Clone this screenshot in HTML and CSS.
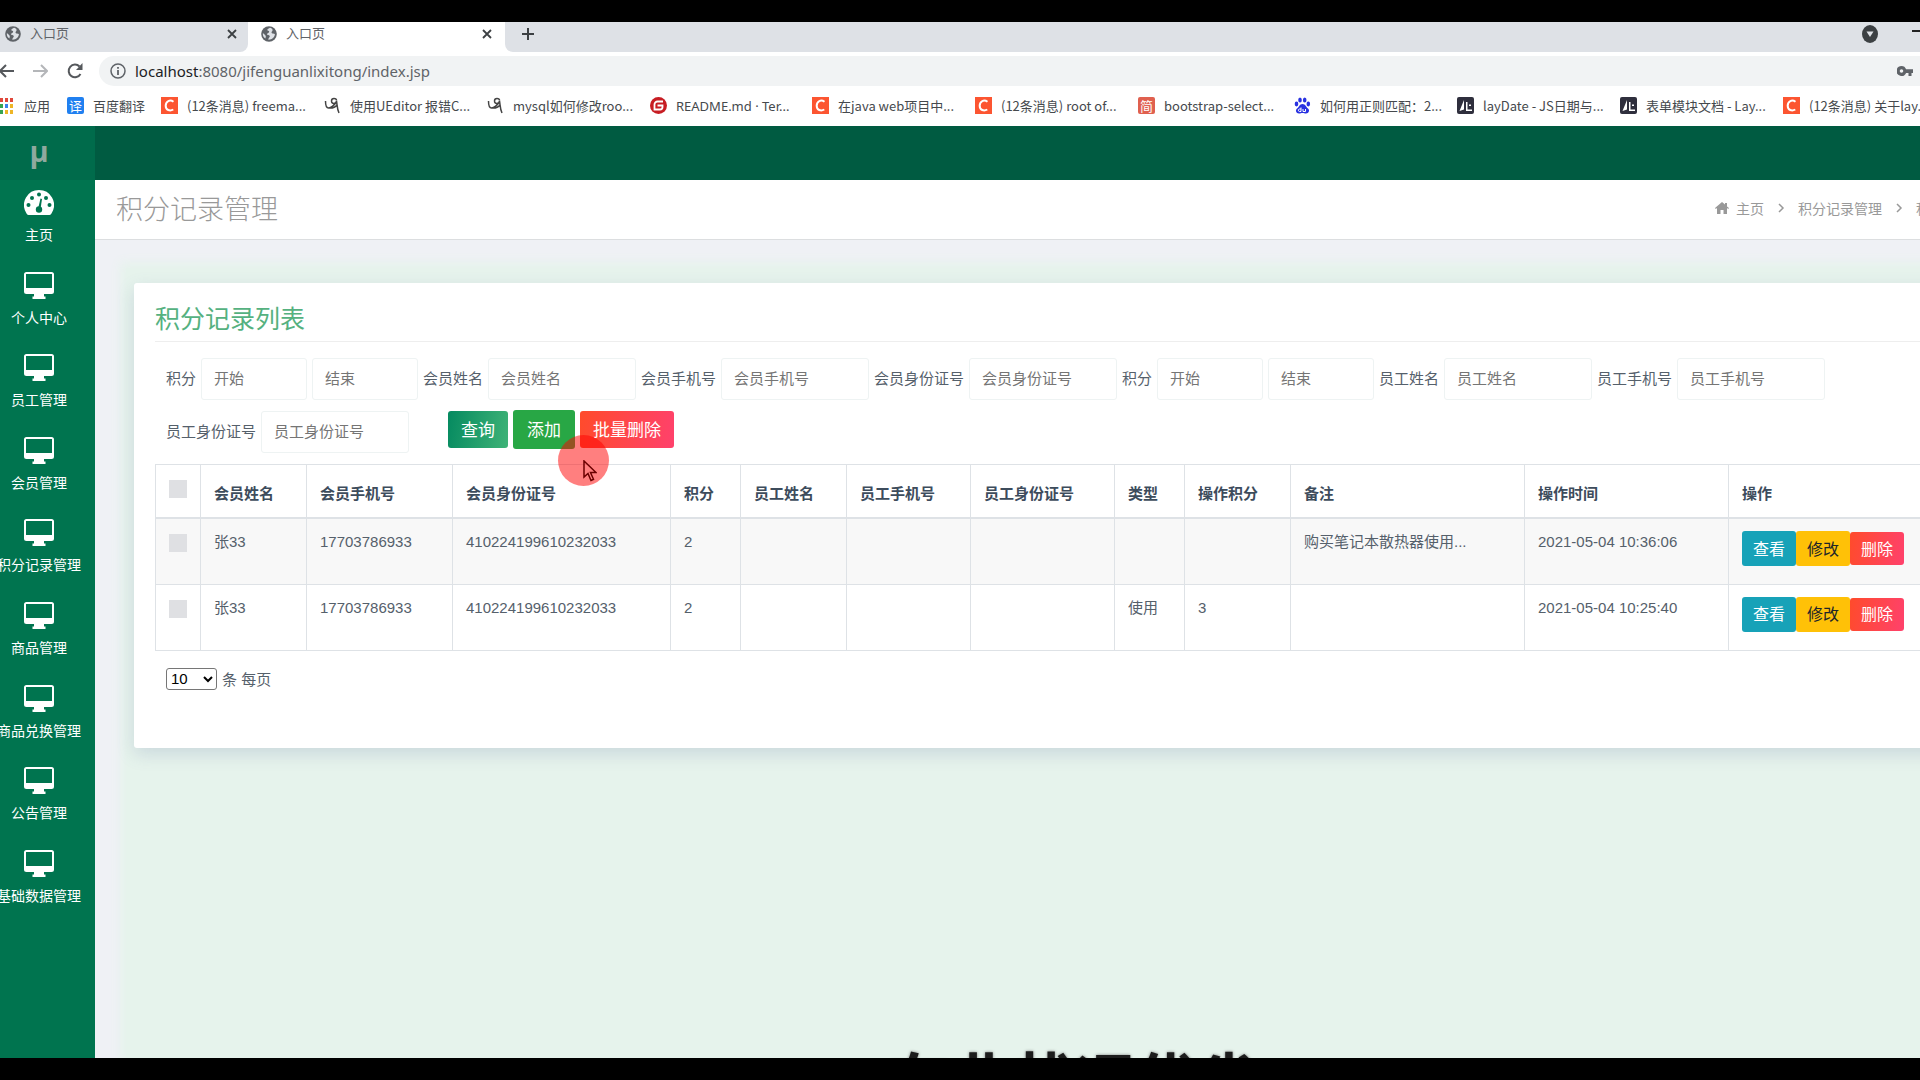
FILE: index.html
```html
<!DOCTYPE html>
<html lang="zh-CN">
<head>
  <meta charset="utf-8">
  <title>入口页</title>
  <link rel="stylesheet" href="styles.css">
</head>
<body>
  <!-- shared icons -->
  <svg class="sprite">
    <symbol id="i-globe" viewBox="0 0 16 16">
      <circle cx="8" cy="8" r="7.8" fill="#5f6368"/>
      <path d="M9 1.8c-1 1-2.700 1-2.700 2.300 0 1 1.900.5 1.900 1.700S6 7 6 8.200c0 1 2.800.6 2.800 2 0 1.200-1.500 1.400-1.500 3.600 3.500.2 6.500-2.400 6.600-5.700-1.300-1-2.500-.2-3.200-1.200-.7-1.200.9-1.600.9-3C11.500 2.800 10 1.900 9 1.800zM1.900 7c.9 1.400 2.600 1.400 2.900 3.200.1.900-.4 1.600-.3 2.400C2.400 11.300 1.500 9.200 1.900 7z" fill="#dee1e6"/>
    </symbol>
    <symbol id="i-close" viewBox="0 0 12 12">
      <path d="M2 2l8 8M10 2l-8 8" stroke="#3c4043" stroke-width="1.800" fill="none"/>
    </symbol>
    <symbol id="i-desktop" viewBox="0 0 30 28">
      <path d="M2.500 0h25A2.500 2.500 0 0 1 30 2.500v17a2.500 2.500 0 0 1-2.500 2.500H20v2.500h1.500V27h-13v-2.500H10V22H2.500A2.500 2.500 0 0 1 0 19.500v-17A2.500 2.500 0 0 1 2.500 0zM2 2v14h26V2z" fill="#fff" fill-rule="evenodd"/>
    </symbol>
    <symbol id="i-csdn" viewBox="0 0 17 17">
      <path d="M0 0h17v17H0z" fill="#fc5531"/>
      <path d="M12.500 4.700C9 2.300 4.700 4 4.700 8.700c0 4.500 4.300 5.700 7.600 3.800" stroke="#fff" stroke-width="2" fill="none"/>
    </symbol>
    <symbol id="i-ue" viewBox="0 0 17 17">
      <path d="M1.500 4c0 5 .5 7 3 7s5-2 8-6M12.500 3.500c0-2.500-5-3-5 .5s4.500 3 5 0c.8 4 .5 8 2.500 12M4.500 11c4 .5 7-1 8.500-3" stroke="#444" stroke-width="1.500" fill="none"/>
    </symbol>
    <symbol id="i-lay" viewBox="0 0 17 17">
      <rect width="17" height="17" rx="2" fill="#2f2f3d"/>
      <path d="M2.500 14L7 3v9.500zM9 5v9h6v-1.500h-4.500V5zM12 7.500h2v1.500h-2z" fill="#fff"/>
    </symbol>
    <symbol id="i-chevron" viewBox="0 0 8 12">
      <path d="M2 2l4 4-4 4" stroke="#999" stroke-width="1.500" fill="none"/>
    </symbol>
  </svg>

  <div class="screen">
    <div class="tabs">
      <div class="tab">
        <svg class="tab-icon"><use href="#i-globe"/></svg>
        <span class="tab-title">入口页</span>
        <button class="icon-btn" aria-label="关闭"><svg class="close"><use href="#i-close"/></svg></button>
      </div>
      <div class="tab active">
        <svg class="tab-icon"><use href="#i-globe"/></svg>
        <span class="tab-title">入口页</span>
        <button class="icon-btn" aria-label="关闭"><svg class="close"><use href="#i-close"/></svg></button>
      </div>
      <div class="tab-rest">
        <button class="icon-btn" aria-label="新标签页">
          <svg width="14" height="14" viewBox="0 0 14 14"><path d="M7 1v12M1 7h12" stroke="#3c4043" stroke-width="2"/></svg>
        </button>
        <div class="window-actions">
          <svg width="16" height="18" viewBox="0 0 16 18"><ellipse cx="8" cy="9" rx="8" ry="9" fill="#3c4043"/><path d="M4.500 6.500h7L8 12z" fill="#dee1e6"/></svg>
          <svg width="8" height="18" viewBox="0 0 8 18"><path d="M0 6h8" stroke="#222" stroke-width="2"/></svg>
        </div>
      </div>
    </div>

    <div class="toolbar">
      <button class="icon-btn" aria-label="后退"><svg width="14" height="16" viewBox="0 0 14 16"><path d="M14 8H0M6 2L0 8l6 6" stroke="#55585c" stroke-width="2" fill="none"/></svg></button>
      <button class="icon-btn" aria-label="前进"><svg width="15" height="16" viewBox="0 0 15 16"><path d="M0 8h14M8 2l6 6-6 6" stroke="#b4b6b9" stroke-width="2" fill="none"/></svg></button>
      <button class="icon-btn" aria-label="刷新"><svg width="16" height="16" viewBox="0 0 16 16"><path d="M13.500 11A6.300 6.300 0 1 1 12.500 3.500" stroke="#55585c" stroke-width="2" fill="none"/><path d="M15.500 0v7H9z" fill="#55585c"/></svg></button>
      <div class="address">
        <svg width="16" height="16" viewBox="0 0 16 16"><circle cx="8" cy="8" r="7" fill="none" stroke="#5f6368" stroke-width="1.500"/><path d="M8 7v5M8 4v1.700" stroke="#5f6368" stroke-width="1.800"/></svg>
        <span class="url"><b>localhost</b>:8080/jifenguanlixitong/index.jsp</span>
        <svg width="16" height="12" viewBox="0 0 16 12"><path d="M4.500 1a5 5 0 0 1 4.600 3.300H16V8h-1.500v3h-3V8H9.100A5 5 0 1 1 4.500 1zm0 3.200a1.800 1.800 0 1 0 0 3.600 1.800 1.800 0 0 0 0-3.600z" fill="#5f6368" fill-rule="evenodd"/></svg>
      </div>
    </div>

    <div class="bookmarks">
      <a class="bookmark apps" href="#">
        <svg width="13" height="17" viewBox="0 0 13 17"><path d="M0 1h3v4H0zM5 1h3v4H5zM10 1h3v4h-3z" fill="#e0483c"/><path d="M0 7h3v4H0z" fill="#36a351"/><path d="M5 7h3v4H5z" fill="#3b82ec"/><path d="M10 7h3v4h-3zM10 13h3v4h-3zM5 13h3v4H5z" fill="#eeb526"/><path d="M0 13h3v4H0z" fill="#36a351"/></svg>
        应用
      </a>
      <a class="bookmark trans" href="#"><span class="badge blue">译</span>百度翻译</a>
      <a class="bookmark" href="#"><svg><use href="#i-csdn"/></svg>(12条消息) freema...</a>
      <a class="bookmark" href="#"><svg><use href="#i-ue"/></svg>使用UEditor 报错C...</a>
      <a class="bookmark" href="#"><svg><use href="#i-ue"/></svg>mysql如何修改roo...</a>
      <a class="bookmark latin" href="#"><svg viewBox="0 0 17 17"><circle cx="8.500" cy="8.500" r="8.500" fill="#c71d23"/><path d="M13 4.500H7.500a3 3 0 0 0-3 3v5H10a2.500 2.500 0 0 0 2.500-2.500V8.500H7.500" stroke="#fff" stroke-width="1.800" fill="none"/></svg>README.md · Ter...</a>
      <a class="bookmark" href="#"><svg><use href="#i-csdn"/></svg>在java web项目中...</a>
      <a class="bookmark" href="#"><svg><use href="#i-csdn"/></svg>(12条消息) root of...</a>
      <a class="bookmark short" href="#"><span class="badge red">简</span>bootstrap-select...</a>
      <a class="bookmark" href="#"><svg viewBox="0 0 17 17"><g fill="#2932e1"><ellipse cx="2.500" cy="7" rx="1.800" ry="2.400"/><ellipse cx="6" cy="3" rx="1.800" ry="2.500"/><ellipse cx="10.700" cy="3" rx="1.800" ry="2.500"/><ellipse cx="14.300" cy="7" rx="1.800" ry="2.400"/><path d="M8.500 7c3 0 3.500 3 5.500 4.500s1 5-2 5c-1.500 0-2-.5-3.500-.5s-2 .5-3.500.5c-3 0-4-3.500-2-5S5.500 7 8.500 7z"/></g><path d="M7 10.500v4H5.500c-1.500 0-1.500-2.500 0-2.500H7M9 12v2.500h2.500V12" stroke="#fff" fill="none"/></svg>如何用正则匹配：2...</a>
      <a class="bookmark" href="#"><svg><use href="#i-lay"/></svg>layDate - JS日期与...</a>
      <a class="bookmark" href="#"><svg><use href="#i-lay"/></svg>表单模块文档 - Lay...</a>
      <a class="bookmark" href="#"><svg><use href="#i-csdn"/></svg>(12条消息) 关于lay...</a>
    </div>

    <div class="app">
      <aside class="sidebar">
        <div class="logo">μ</div>
        <nav class="menu">
          <a href="#">
            <svg viewBox="0 0 30 28"><path d="M15 1a15 15 0 0 1 13 22.500c-.8 1.500-1.200 2.500-2.500 2.500h-21C3.200 26 2.800 25 2 23.500A15 15 0 0 1 15 1z" fill="#fff"/><g fill="#00744f"><circle cx="4.500" cy="16" r="2"/><circle cx="8" cy="9" r="2"/><circle cx="15" cy="5.500" r="2"/><circle cx="22" cy="9" r="2"/><circle cx="25.500" cy="16" r="2"/><circle cx="15" cy="20.500" r="3.200"/><path d="M14 20l2.500-10.500 1.500.4L16.500 20z"/></g></svg>
            主页
          </a>
          <a href="#"><svg><use href="#i-desktop"/></svg>个人中心</a>
          <a href="#"><svg><use href="#i-desktop"/></svg>员工管理</a>
          <a href="#"><svg><use href="#i-desktop"/></svg>会员管理</a>
          <a href="#"><svg><use href="#i-desktop"/></svg>积分记录管理</a>
          <a href="#"><svg><use href="#i-desktop"/></svg>商品管理</a>
          <a href="#"><svg><use href="#i-desktop"/></svg>商品兑换管理</a>
          <a href="#"><svg><use href="#i-desktop"/></svg>公告管理</a>
          <a href="#"><svg><use href="#i-desktop"/></svg>基础数据管理</a>
        </nav>
      </aside>

      <div class="main">
        <div class="navbar"></div>
        <div class="page-header">
          <h1>积分记录管理</h1>
          <div class="breadcrumb">
            <svg width="14" height="12" viewBox="0 0 14 12"><path d="M7 0l3 2.600V1h2v3.400L14 6l-.8 1L12 6v6H8.500V8h-3v4H2V6L.8 7 0 6z" fill="#999"/></svg>
            <a href="#">主页</a>
            <svg class="chevron"><use href="#i-chevron"/></svg>
            <a href="#">积分记录管理</a>
            <svg class="chevron"><use href="#i-chevron"/></svg>
            <span>积分记录列表</span>
          </div>
        </div>

        <div class="content">
          <div class="card">
            <h3 class="card-title">积分记录列表</h3>
            <form class="search">
              <div class="search-row">
                <label for="jf-start">积分</label>
                <input class="short" id="jf-start" type="text" placeholder="开始">
                <input class="short" aria-label="积分结束" type="text" placeholder="结束">
                <label for="hy-name">会员姓名</label>
                <input id="hy-name" type="text" placeholder="会员姓名">
                <label for="hy-phone">会员手机号</label>
                <input id="hy-phone" type="text" placeholder="会员手机号">
                <label for="hy-card">会员身份证号</label>
                <input id="hy-card" type="text" placeholder="会员身份证号">
                <label for="jf2-start">积分</label>
                <input class="short" id="jf2-start" type="text" placeholder="开始">
                <input class="short" aria-label="积分结束" type="text" placeholder="结束">
                <label for="yg-name">员工姓名</label>
                <input id="yg-name" type="text" placeholder="员工姓名">
                <label for="yg-phone">员工手机号</label>
                <input id="yg-phone" type="text" placeholder="员工手机号">
              </div>
              <div class="search-row">
                <label for="yg-card">员工身份证号</label>
                <input id="yg-card" type="text" placeholder="员工身份证号">
                <div class="search-actions">
                  <button type="button" class="btn btn-primary">查询</button>
                  <button type="button" class="btn btn-success">添加</button>
                  <button type="button" class="btn btn-danger">批量删除</button>
                </div>
              </div>
            </form>

            <table class="table">
              <colgroup>
                <col class="w-check"><col class="w-name"><col class="w-phone"><col class="w-card"><col class="w-type">
                <col class="w-name"><col class="w-tel"><col class="w-id"><col class="w-type"><col class="w-name">
                <col class="w-note"><col class="w-time"><col>
              </colgroup>
              <thead>
                <tr>
                  <th><input type="checkbox" aria-label="全选"></th>
                  <th>会员姓名</th>
                  <th>会员手机号</th>
                  <th>会员身份证号</th>
                  <th>积分</th>
                  <th>员工姓名</th>
                  <th>员工手机号</th>
                  <th>员工身份证号</th>
                  <th>类型</th>
                  <th>操作积分</th>
                  <th>备注</th>
                  <th>操作时间</th>
                  <th>操作</th>
                </tr>
              </thead>
              <tbody>
                <tr>
                  <td><input type="checkbox" aria-label="选择"></td>
                  <td>张33</td>
                  <td>17703786933</td>
                  <td>410224199610232033</td>
                  <td>2</td>
                  <td></td>
                  <td></td>
                  <td></td>
                  <td></td>
                  <td></td>
                  <td>购买笔记本散热器使用...</td>
                  <td>2021-05-04 10:36:06</td>
                  <td>
                    <div class="row-actions">
                      <button class="btn btn-info">查看</button>
                      <button class="btn btn-warning">修改</button>
                      <button class="btn btn-danger">删除</button>
                    </div>
                  </td>
                </tr>
                <tr>
                  <td><input type="checkbox" aria-label="选择"></td>
                  <td>张33</td>
                  <td>17703786933</td>
                  <td>410224199610232033</td>
                  <td>2</td>
                  <td></td>
                  <td></td>
                  <td></td>
                  <td>使用</td>
                  <td>3</td>
                  <td></td>
                  <td>2021-05-04 10:25:40</td>
                  <td>
                    <div class="row-actions">
                      <button class="btn btn-info">查看</button>
                      <button class="btn btn-warning">修改</button>
                      <button class="btn btn-danger">删除</button>
                    </div>
                  </td>
                </tr>
              </tbody>
            </table>

            <div class="pager">
              <select id="page-size"><option>10</option><option>20</option><option>50</option></select>
              <label for="page-size">条 每页</label>
            </div>
          </div>
        </div>
      </div>
    </div>

    <div class="caption">在业状况优劣</div>
    <div class="pointer">
      <svg width="14" height="22" viewBox="0 0 14 22"><path d="M1 1v16l4-3.500 3 7 2.500-1.200-3-6.800H13z" fill="none" stroke="#6b0000" stroke-width="1.500"/></svg>
    </div>
  </div>
</body>
</html>
```
FILE: styles.css
```css
* {
  box-sizing: border-box;
}

body {
  margin: 0;
  background: #000;
  font-family: "Liberation Sans", "Noto Sans CJK SC", sans-serif;
  font-size: 15px;
  color: #55606b;
}

a {
  color: inherit;
  text-decoration: none;
}

.sprite {
  display: none;
}

.screen {
  position: relative;
  display: flex;
  flex-direction: column;
  height: 100vh;
  border: solid #000;
  border-width: 22px 0;
  overflow: hidden;
  background: #fff;
}

/* browser chrome */
.tabs {
  display: flex;
  flex: none;
  height: 30px;
}

.tab {
  display: flex;
  align-items: center;
  width: 248px;
  padding: 0 10px 6px 5px;
  border-radius: 0 0 8px 0;
  background: #dee1e6;
  color: #5f6368;
  font-size: 13px;
  line-height: 24px;
}

.tab.active {
  width: 257px;
  padding: 0 12px 6px 13px;
  background: #fff;
}

.tab-icon {
  width: 16px;
  height: 16px;
  margin-right: 9px;
}

.tab-title {
  flex: 1;
}

.tab-rest {
  display: flex;
  flex: 1;
  align-items: center;
  justify-content: space-between;
  padding: 0 0 6px 16px;
  border-radius: 0 0 0 8px;
  background: #dee1e6;
}

.icon-btn {
  display: flex;
  padding: 0;
  border: none;
  background: none;
}

.close {
  width: 12px;
  height: 12px;
}

.window-actions {
  display: flex;
  gap: 34px;
}

.toolbar {
  display: flex;
  flex: none;
  align-items: center;
  gap: 19px;
  height: 38px;
}

.address {
  display: flex;
  flex: 1;
  align-items: center;
  height: 30px;
  margin-left: -3px;
  padding: 0 7px 0 11px;
  border-radius: 15px 0 0 15px;
  background: #f1f3f4;
}

.url {
  flex: 1;
  margin-left: 9px;
  font-family: "Noto Sans", sans-serif;
  font-size: 15px;
  color: #5f6368;
}

.url b {
  font-weight: normal;
  color: #202124;
}

.bookmarks {
  display: flex;
  flex: none;
  align-items: center;
  gap: 18px;
  height: 36px;
  padding-bottom: 5px;
  overflow: hidden;
  font-family: "Noto Sans CJK SC", sans-serif;
  font-size: 13px;
  color: #45494d;
}

.bookmark {
  display: flex;
  flex: none;
  align-items: center;
  gap: 9px;
  width: 145px;
  white-space: nowrap;
}

.bookmark.apps {
  gap: 11px;
  width: 49px;
}

.bookmark.trans {
  width: 76px;
}

.bookmark.short {
  width: 138px;
}

.bookmark.latin {
  width: 144px;
  font-family: "Noto Sans", sans-serif;
}

.bookmark svg {
  flex: none;
  width: 17px;
  height: 17px;
}

.bookmark.apps svg {
  width: 13px;
}

.badge {
  flex: none;
  width: 17px;
  border-radius: 2px;
  font-size: 13px;
  line-height: 17px;
  text-align: center;
  color: #fff;
}

.badge.blue {
  background: #2080f0;
}

.badge.red {
  background: #e0604f;
}

/* admin page */
.app {
  display: flex;
  flex: 1;
  min-height: 0;
}

.sidebar {
  flex: none;
  width: 112px;
  margin-left: -17px;
  background: #00744f;
  color: #fff;
}

.logo {
  height: 54px;
  background: #006b4b;
  color: #8fa99f;
  font-family: "Open Sans", sans-serif;
  font-size: 29px;
  font-weight: bold;
  line-height: 50px;
  text-align: center;
}

.menu {
  display: grid;
  grid-auto-rows: 1fr;
  height: 743px;
}

.menu a {
  display: flex;
  flex-direction: column;
  align-items: center;
  justify-content: center;
  gap: 8px;
  padding-bottom: 8px;
  font-size: 14px;
  line-height: 20px;
}

.menu svg {
  width: 30px;
  height: 28px;
}

.main {
  display: flex;
  flex: 1;
  flex-direction: column;
  min-width: 0;
  background: #eff1f5;
}

.navbar {
  flex: none;
  height: 54px;
  background: #005b41;
}

.page-header {
  display: flex;
  flex: none;
  align-items: center;
  justify-content: space-between;
  height: 60px;
  padding: 0 0 4px 21px;
  border-bottom: 1px solid #dcdee0;
  background: #fff;
  color: #999;
}

.page-header h1 {
  margin: 0;
  font-size: 27px;
  font-weight: 300;
}

.breadcrumb {
  display: flex;
  align-items: center;
  gap: 7px;
  margin-right: -80px;
  font-size: 14px;
  white-space: nowrap;
}

.chevron {
  width: 8px;
  height: 12px;
  margin: 0 6px;
}

.content {
  flex: 1;
  margin: 28px -60px 0 31px;
  padding: 15px 8px;
  background: #e6f3ec;
  box-shadow: 0 0 10px 6px #e6f3ec;
}

.card {
  height: 465px;
  padding: 17px 21px;
  border-radius: 3px;
  background: #fff;
  box-shadow: 0 6px 18px rgba(90, 110, 160, 0.2);
}

.card-title {
  margin: 0 0 16px;
  padding-bottom: 3px;
  border-bottom: 1px solid #eee;
  font-size: 25px;
  font-weight: normal;
  line-height: 38px;
  color: #55b17f;
}

.search {
  padding-left: 11px;
}

.search-row {
  display: flex;
  align-items: center;
  gap: 5px;
  margin-bottom: 11px;
}

.search-row label {
  flex: none;
  padding-bottom: 4px;
}

.search input {
  width: 148px;
  height: 42px;
  padding: 0 12px 2px;
  border: 1px solid #eef3f3;
  border-radius: 3px;
  font: inherit;
}

.search input::placeholder {
  color: #757575;
}

.search .short {
  width: 106px;
}

.search-actions {
  display: flex;
  align-items: center;
  gap: 5px;
  height: 42px;
  padding: 0 0 6px 34px;
}

.btn {
  height: 37px;
  padding: 0 13px 2px;
  border: none;
  border-radius: 3px;
  font-family: inherit;
  font-size: 17px;
  color: #fff;
}

.btn-primary {
  background: linear-gradient(100deg, #058a60, #3fb377);
}

.btn-success {
  height: 39px;
  padding: 0 14px 2px;
  background: #28a745;
}

.btn-danger {
  background: linear-gradient(100deg, #ff4b2b, #ff416c);
}

.table {
  width: 100%;
  border-collapse: collapse;
  table-layout: fixed;
}

.w-check { width: 45px; }
.w-name { width: 106px; }
.w-phone { width: 146px; }
.w-card { width: 218px; }
.w-type { width: 70px; }
.w-tel { width: 124px; }
.w-id { width: 144px; }
.w-note { width: 234px; }
.w-time { width: 204px; }

.table th,
.table td {
  height: 66px;
  padding: 12px 13px;
  border: 1px solid #dee2e6;
  line-height: 22px;
  text-align: left;
  vertical-align: top;
  white-space: nowrap;
}

.table th {
  height: 53px;
  padding: 18px 13px 12px;
  border-bottom-width: 2px;
  color: #3d4c5c;
}

.table tbody tr:first-child {
  background: #f8f8f8;
}

.table input {
  display: block;
  appearance: none;
  width: 18px;
  height: 18px;
  margin: 3px 0 0;
  background: #dfe0e3;
}

.table th input {
  margin-top: -3px;
}

.row-actions {
  display: flex;
  align-items: center;
}

.row-actions .btn {
  height: 35px;
  padding: 0 11px 2px;
  font-size: 16px;
}

.row-actions .btn-danger {
  height: 33px;
}

.btn-info {
  background: #17a2b8;
}

.btn-warning {
  background: #ffc107;
  color: #212529;
}

.pager {
  display: flex;
  align-items: center;
  gap: 5px;
  margin-top: 17px;
  padding-left: 11px;
}

.pager select {
  width: 51px;
  height: 22px;
  border: 1px solid #767676;
  border-radius: 3px;
  background: #fff;
  font: inherit;
}

/* things drawn over the page */
.caption {
  position: absolute;
  left: 0;
  right: 0;
  bottom: -59px;
  padding-left: 228px;
  font-size: 62px;
  font-weight: bold;
  line-height: 66px;
  text-align: center;
  color: #1c1c1c;
  text-shadow: 0 0 3px #777;
}

.pointer {
  position: absolute;
  top: 413px;
  left: 558px;
  width: 51px;
  height: 51px;
  padding: 25px;
  border-radius: 50%;
  background: rgba(255, 0, 0, 0.5);
}
```
